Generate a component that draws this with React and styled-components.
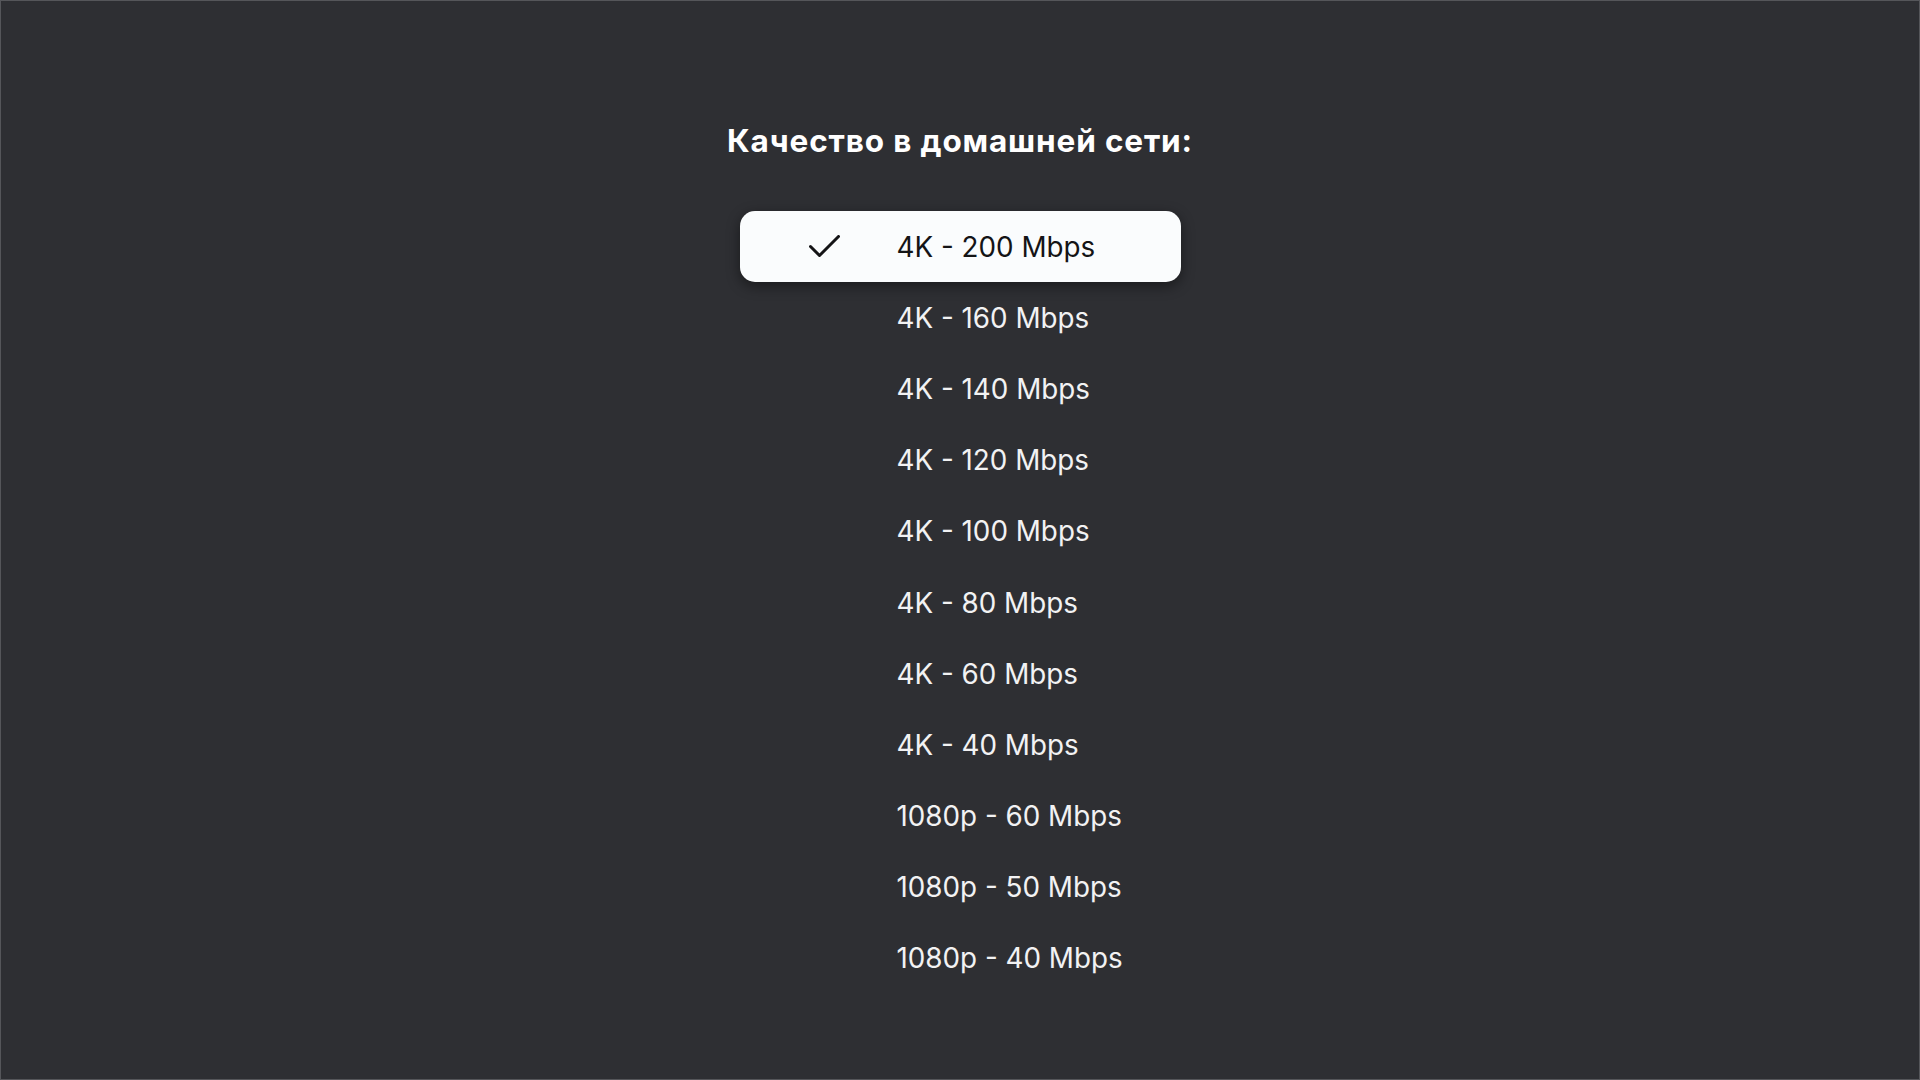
import React from 'react';
import styled, { createGlobalStyle } from 'styled-components';

const GlobalStyle = createGlobalStyle`
  html, body {
    margin: 0;
    padding: 0;
    background: #2e2f33;
  }
  * {
    box-sizing: border-box;
  }
`;

const Page = styled.div`
  width: 100vw;
  height: 100vh;
  background: #2e2f33;
  border: 1px solid #55565a;
  display: flex;
  flex-direction: column;
  align-items: center;
  padding-top: 122px;
  font-family: Inter, "Noto Sans", "Liberation Sans", sans-serif;
  overflow: hidden;
`;

const Title = styled.h1`
  margin: 0 0 52px;
  font-size: 31.5px;
  line-height: 36px;
  font-weight: 700;
  color: #ffffff;
  letter-spacing: 0.85px;
`;

const List = styled.div`
  width: 441px;
  display: flex;
  flex-direction: column;
`;

const Option = styled.div`
  height: 71.2px;
  display: grid;
  grid-template-columns: 157px 1fr;
  align-items: center;
  border-radius: 15px;
  font-size: 27.8px;
  font-weight: 400;
  color: ${p => (p.selected ? '#141416' : '#f2f2f3')};
  background: ${p => (p.selected ? '#fafcfd' : 'transparent')};
  box-shadow: ${p => (p.selected ? '0 4px 14px rgba(0, 0, 0, 0.45)' : 'none')};
`;

const CheckCell = styled.div`
  padding-left: 69px;
  display: flex;
  align-items: center;
`;

const Label = styled.span`
  white-space: nowrap;
`;

function CheckMark() {
  return (
    <svg width="31" height="23" viewBox="0 0 31 23" fill="none">
      <polyline
        points="1.5,11.5 10.5,20.5 29.5,1.5"
        stroke="#141416"
        strokeWidth="3"
        strokeLinecap="round"
        strokeLinejoin="round"
      />
    </svg>
  );
}

const options = [
  '4K - 200 Mbps',
  '4K - 160 Mbps',
  '4K - 140 Mbps',
  '4K - 120 Mbps',
  '4K - 100 Mbps',
  '4K - 80 Mbps',
  '4K - 60 Mbps',
  '4K - 40 Mbps',
  '1080p - 60 Mbps',
  '1080p - 50 Mbps',
  '1080p - 40 Mbps',
];

export default function App() {
  const selected = 0;
  return (
    <>
      <GlobalStyle />
      <Page>
        <Title>Качество в домашней сети:</Title>
        <List>
          {options.map((text, i) => (
            <Option key={text} selected={i === selected}>
              <CheckCell>{i === selected && <CheckMark />}</CheckCell>
              <Label>{text}</Label>
            </Option>
          ))}
        </List>
      </Page>
    </>
  );
}
